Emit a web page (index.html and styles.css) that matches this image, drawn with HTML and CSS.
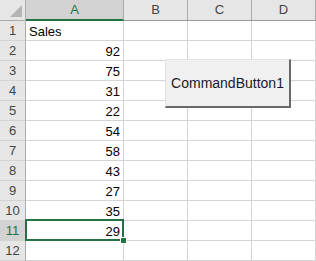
FILE: index.html
```html
<!DOCTYPE html>
<html lang="en">

<head>
    <meta charset="UTF-8">
    <title>Sheet1</title>
    <link rel="stylesheet" href="styles.css">
</head>

<body>
    <div id="sheet">
        <div class="corner"></div>
        <div class="colHead active">A</div>
        <div class="colHead">B</div>
        <div class="colHead">C</div>
        <div class="colHead">D</div>

        <div class="rowHead">1</div>
        <div class="cell">Sales</div>
        <div class="cell"></div><div class="cell"></div><div class="cell"></div>

        <div class="rowHead">2</div>
        <div class="cell num">92</div>
        <div class="cell"></div><div class="cell"></div><div class="cell"></div>

        <div class="rowHead">3</div>
        <div class="cell num">75</div>
        <div class="cell"></div><div class="cell"></div><div class="cell"></div>

        <div class="rowHead">4</div>
        <div class="cell num">31</div>
        <div class="cell"></div><div class="cell"></div><div class="cell"></div>

        <div class="rowHead">5</div>
        <div class="cell num">22</div>
        <div class="cell"></div><div class="cell"></div><div class="cell"></div>

        <div class="rowHead">6</div>
        <div class="cell num">54</div>
        <div class="cell"></div><div class="cell"></div><div class="cell"></div>

        <div class="rowHead">7</div>
        <div class="cell num">58</div>
        <div class="cell"></div><div class="cell"></div><div class="cell"></div>

        <div class="rowHead">8</div>
        <div class="cell num">43</div>
        <div class="cell"></div><div class="cell"></div><div class="cell"></div>

        <div class="rowHead">9</div>
        <div class="cell num">27</div>
        <div class="cell"></div><div class="cell"></div><div class="cell"></div>

        <div class="rowHead">10</div>
        <div class="cell num">35</div>
        <div class="cell"></div><div class="cell"></div><div class="cell"></div>

        <div class="rowHead active">11</div>
        <div class="cell num selected">29</div>
        <div class="cell"></div><div class="cell"></div><div class="cell"></div>

        <div class="rowHead">12</div>
        <div class="cell"></div>
        <div class="cell"></div><div class="cell"></div><div class="cell"></div>

        <button class="cmdButton">CommandButton1</button>
    </div>
</body>

</html>
```

FILE: styles.css
```css
body {
    margin: 0;
    background: #ffffff;
    font-family: "Liberation Sans", Arial, sans-serif;
}

#sheet {
    position: relative;
    display: grid;
    grid-template-columns: 26px 98px 64px 64px 64px;
    grid-template-rows: 21px repeat(12, 20px);
    width: 316px;
    height: 261px;
    overflow: hidden;
}

#sheet>div {
    box-sizing: border-box;
}

.corner {
    position: relative;
    background: #e6e6e6;
    border-right: 1px solid #ababab;
    border-bottom: 1px solid #ababab;
}

.corner::after {
    content: "";
    position: absolute;
    right: 3px;
    bottom: 3px;
    width: 0;
    height: 0;
    border-left: 12px solid transparent;
    border-bottom: 12px solid #b4b4b4;
}

.colHead {
    background: #e6e6e6;
    border-right: 1px solid #ababab;
    border-bottom: 1px solid #9b9b9b;
    color: #444444;
    font-size: 13px;
    text-align: center;
    line-height: 20px;
}

.colHead.active {
    background: #d2d2d2;
    color: #217346;
    border-bottom: 2px solid #217346;
}

.rowHead {
    background: #e6e6e6;
    border-right: 1px solid #ababab;
    border-bottom: 1px solid #d4d4d4;
    color: #444444;
    font-size: 13px;
    text-align: center;
    line-height: 20px;
}

.rowHead.active {
    background: #d2d2d2;
    color: #217346;
}

.cell {
    border-right: 1px solid #d4d4d4;
    border-bottom: 1px solid #d4d4d4;
    color: #000000;
    font-size: 13px;
    line-height: 21px;
    padding: 0 3px;
    white-space: nowrap;
}

.num {
    text-align: right;
}

.selected {
    position: relative;
}

.selected::before {
    content: "";
    position: absolute;
    left: -1px;
    top: -2px;
    right: -1px;
    bottom: -1px;
    border: 2px solid #217346;
}

.selected::after {
    content: "";
    position: absolute;
    right: -4px;
    bottom: -4px;
    width: 5px;
    height: 5px;
    background: #217346;
    border: 1px solid #ffffff;
}

.cmdButton {
    position: absolute;
    left: 165px;
    top: 59px;
    width: 126px;
    height: 49px;
    box-sizing: border-box;
    margin: 0;
    padding: 0;
    background: #f0f0f0;
    border: 1px solid #e3e3e3;
    border-right: 2px solid #696969;
    border-bottom: 2px solid #696969;
    color: #1a1a2a;
    font-family: "Liberation Sans", Arial, sans-serif;
    font-size: 14px;
}
```
